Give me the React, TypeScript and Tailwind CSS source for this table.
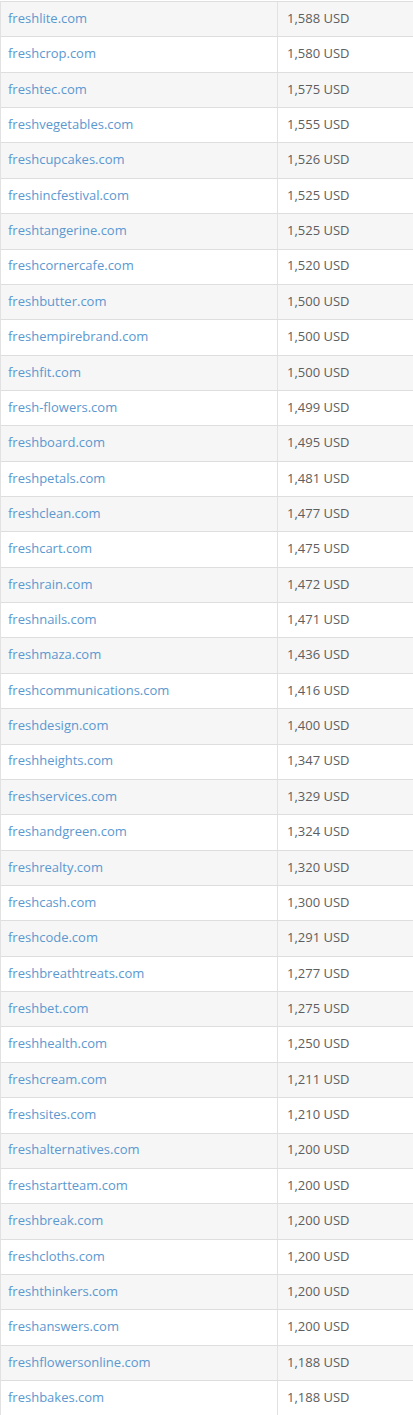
const rows: [string, string][] = [
  ['freshlite.com', '1,588'],
  ['freshcrop.com', '1,580'],
  ['freshtec.com', '1,575'],
  ['freshvegetables.com', '1,555'],
  ['freshcupcakes.com', '1,526'],
  ['freshincfestival.com', '1,525'],
  ['freshtangerine.com', '1,525'],
  ['freshcornercafe.com', '1,520'],
  ['freshbutter.com', '1,500'],
  ['freshempirebrand.com', '1,500'],
  ['freshfit.com', '1,500'],
  ['fresh-flowers.com', '1,499'],
  ['freshboard.com', '1,495'],
  ['freshpetals.com', '1,481'],
  ['freshclean.com', '1,477'],
  ['freshcart.com', '1,475'],
  ['freshrain.com', '1,472'],
  ['freshnails.com', '1,471'],
  ['freshmaza.com', '1,436'],
  ['freshcommunications.com', '1,416'],
  ['freshdesign.com', '1,400'],
  ['freshheights.com', '1,347'],
  ['freshservices.com', '1,329'],
  ['freshandgreen.com', '1,324'],
  ['freshrealty.com', '1,320'],
  ['freshcash.com', '1,300'],
  ['freshcode.com', '1,291'],
  ['freshbreathtreats.com', '1,277'],
  ['freshbet.com', '1,275'],
  ['freshhealth.com', '1,250'],
  ['freshcream.com', '1,211'],
  ['freshsites.com', '1,210'],
  ['freshalternatives.com', '1,200'],
  ['freshstartteam.com', '1,200'],
  ['freshbreak.com', '1,200'],
  ['freshcloths.com', '1,200'],
  ['freshthinkers.com', '1,200'],
  ['freshanswers.com', '1,200'],
  ['freshflowersonline.com', '1,188'],
  ['freshbakes.com', '1,188'],
]

export default function App() {
  return (
    <div className="w-[413px] bg-white pt-[1px] font-['Open_Sans',sans-serif] text-[13px]">
      <div className="border-l border-[#e2e2e2]">
        {rows.map(([domain, price], i) => (
          <div
            key={domain}
            className={`box-border flex h-[35.36px] border-t border-[#dedede] ${i % 2 === 0 ? 'bg-[#f6f6f6]' : 'bg-white'}`}
          >
            <div className="flex w-[277px] items-center border-r border-[#e2e2e2] pb-[1px] pl-[7px]">
              <a href="#" className="text-[#5b98d0]">
                {domain}
              </a>
            </div>
            <div className="flex flex-1 items-center pb-[1px] pl-[9px] text-[#5e5e5e]">{price} USD</div>
          </div>
        ))}
      </div>
    </div>
  )
}
